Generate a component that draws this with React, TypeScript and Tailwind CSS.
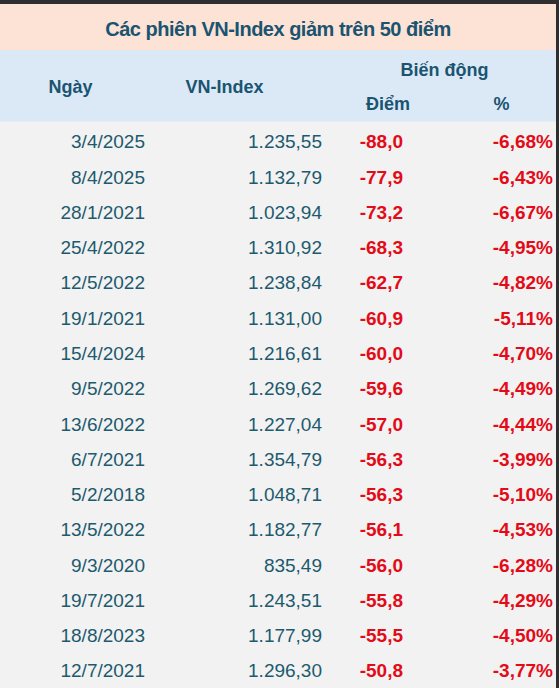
import React from 'react';

const rows = [
  ['3/4/2025', '1.235,55', '-88,0', '-6,68%'],
  ['8/4/2025', '1.132,79', '-77,9', '-6,43%'],
  ['28/1/2021', '1.023,94', '-73,2', '-6,67%'],
  ['25/4/2022', '1.310,92', '-68,3', '-4,95%'],
  ['12/5/2022', '1.238,84', '-62,7', '-4,82%'],
  ['19/1/2021', '1.131,00', '-60,9', '-5,11%'],
  ['15/4/2024', '1.216,61', '-60,0', '-4,70%'],
  ['9/5/2022', '1.269,62', '-59,6', '-4,49%'],
  ['13/6/2022', '1.227,04', '-57,0', '-4,44%'],
  ['6/7/2021', '1.354,79', '-56,3', '-3,99%'],
  ['5/2/2018', '1.048,71', '-56,3', '-5,10%'],
  ['13/5/2022', '1.182,77', '-56,1', '-4,53%'],
  ['9/3/2020', '835,49', '-56,0', '-6,28%'],
  ['19/7/2021', '1.243,51', '-55,8', '-4,29%'],
  ['18/8/2023', '1.177,99', '-55,5', '-4,50%'],
  ['12/7/2021', '1.296,30', '-50,8', '-3,77%'],
];

export default function App() {
  return (
    <div className="w-[559px] h-[688px] bg-[#2f2f2f] pt-[4px] pr-[3px] overflow-hidden font-['Liberation_Sans',Arial,sans-serif]">
      <div className="h-full bg-[#f2f2f2]">
        {/* Title */}
        <div className="h-[46px] bg-[#fde3d5] flex items-center justify-center pt-[3px] text-[20px] font-bold text-[#1a5471] tracking-[-0.5px]">
          Các phiên VN-Index giảm trên 50 điểm
        </div>

        {/* Header */}
        <div className="h-[72px] bg-[#dbe9f7] flex text-[18px] font-bold text-[#1a5471] border-b border-[#e6eef6]">
          <div className="w-[145px] flex items-center justify-center pr-[4px] pt-[3px]">Ngày</div>
          <div className="w-[177px] flex items-center justify-center pr-[18px] pt-[3px]">VN-Index</div>
          <div className="w-[231px] flex flex-col">
            <div className="h-[38px] flex items-center justify-center pl-[14px] pt-[3px]">Biến động</div>
            <div className="flex-1 flex items-center">
              <div className="w-[88px] text-right">Điểm</div>
              <div className="flex-1 text-center pl-[40px]">%</div>
            </div>
          </div>
        </div>

        {/* Body */}
        <div className="pt-[3px]">
          {rows.map((r) => (
            <div key={r[0]} className="h-[35.27px] grid grid-cols-[145px_177px_81px_150px] items-center text-[19px]">
              <div className="text-right text-[#1d5a6e]">{r[0]}</div>
              <div className="text-right text-[#1d5a6e]">{r[1]}</div>
              <div className="text-right font-bold text-[#e30b17]">{r[2]}</div>
              <div className="text-right font-bold text-[#e30b17]">{r[3]}</div>
            </div>
          ))}
        </div>
      </div>
    </div>
  );
}
